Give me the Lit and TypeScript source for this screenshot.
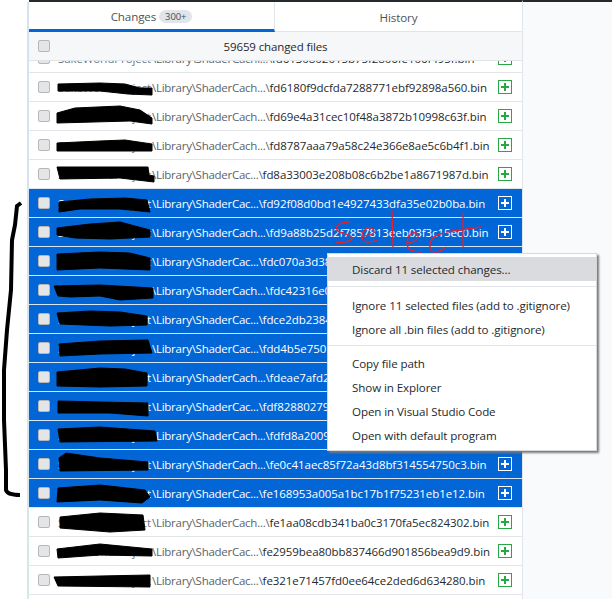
import { LitElement, html, css, svg } from "lit";
import { customElement } from "lit/decorators.js";

const rows: [string, string, boolean][] = [
  ["ShaderCachi...", "fd6130802015b75f2806fe106f495f.bin", false],
  ["ShaderCach...", "fd6180f9dcfda7288771ebf92898a560.bin", false],
  ["ShaderCach...", "fd69e4a31cec10f48a3872b10998c63f.bin", false],
  ["ShaderCach...", "fd8787aaa79a58c24e366e8ae5c6b4f1.bin", false],
  ["ShaderCac...", "fd8a33003e208b08c6b2be1a8671987d.bin", false],
  ["ShaderCac...", "fd92f08d0bd1e4927433dfa35e02b0ba.bin", true],
  ["ShaderCach...", "fd9a88b25d2f7857813eeb03f3c15ec0.bin", true],
  ["ShaderCac...", "fdc070a3d38e4f20a1c97b6de2f1a3b0.bin", true],
  ["ShaderCach...", "fdc42316e0b7d95ac1486f2e37ab90d1.bin", true],
  ["ShaderCac...", "fdce2db2384a9f06c7e15d8b3f60a2c4.bin", true],
  ["ShaderCac...", "fdd4b5e7501c8a3fd296e47b0c1a85e3.bin", true],
  ["ShaderCach...", "fdeae7afd25b1c08e94f36a7d2018c6f.bin", true],
  ["ShaderCac...", "fdf828802794e1ba6d03c5f79a1e28b4.bin", true],
  ["ShaderCach...", "fdfd8a20096e3d17b5c2f840a9e17d36.bin", true],
  ["ShaderCach...", "fe0c41aec85f72a43d8bf314554750c3.bin", true],
  ["ShaderCac...", "fe168953a005a1bc17b1f75231eb1e12.bin", true],
  ["ShaderCach...", "fe1aa08cdb341ba0c3170fa5ec824302.bin", false],
  ["ShaderCac...", "fe2959bea80bb837466d901856bea9d9.bin", false],
  ["ShaderCac...", "fe321e71457fd0ee64ce2ded6d634280.bin", false],
  ["ShaderCach...", "fe3a90c17de24b586f01a3c8e7d2b946.bin", false],
];

const blots = [
  "M58 84 L100 83 L125 84 L140 88 L152 88 L152 95 L128 94 L100 91 L58 91Z",
  "M57 113 L75 108 L120 106 L140 110 L152 118 L152 124 L130 121 L57 123Z",
  "M57 143 L100 141 L125 140 L152 144 L152 151 L57 151Z",
  "M57 167 L148 167 L149 175 L154 176 L154 182 L120 178 L60 179Z",
  "M59 202 L90 199 L125 198 L147 200 L150 212 L120 209 L80 209 L59 212Z",
  "M57 228 L90 224 L120 222 L150 230 L150 237 L110 239 L75 238 L57 235Z",
  "M57 254 L100 252 L130 253 L150 258 L150 270 L100 268 L57 270Z",
  "M54 286 L100 285 L153 288 L153 298 L120 300 L100 296 L70 297 L58 296Z",
  "M57 313 L90 311 L120 312 L147 316 L147 325 L110 326 L60 324Z",
  "M59 344 L100 341 L148 340 L152 353 L100 354 L60 356Z",
  "M57 372 L100 368 L125 369 L147 373 L147 386 L100 387 L57 386Z",
  "M58 401 L100 402 L148 403 L148 416 L110 413 L58 413Z",
  "M58 429 L100 427 L155 431 L157 441 L60 442Z",
  "M59 458 L66 453 L100 458 L148 462 L148 470 L60 471Z",
  "M58 488 L100 485 L145 490 L150 497 L142 503 L100 500 L57 502Z",
  "M60 517 L100 513 L143 515 L145 530 L110 532 L60 528Z",
  "M57 549 L100 544 L152 549 L152 556 L100 555 L58 558Z",
  "M54 577 L100 576 L150 575 L150 587 L58 586Z",
];

const redStrokes = [
  "M349 222 C340 222 335 226 337 230 C340 234 353 234 352 238 C351 242 342 243 336 242",
  "M363 236 C368 236 375 234 374 231 C372 226 366 227 363 232 C360 238 364 243 369 242 C372 242 375 241 378 240",
  "M392 210 L393 248",
  "M408 243 C412 243 419 240 418 236 C417 231 411 232 408 238 C405 245 409 251 414 251 C417 252 419 252 421 252",
  "M444 233 C437 234 431 238 430 244 C429 250 432 253 437 252 C441 251 444 249 446 247",
  "M463 213 L463 248",
  "M446 232 L481 227",
];

@customElement("app-root")
export class AppRoot extends LitElement {
  static styles = css`
    :host {
      display: block;
      font-family: "Open Sans", "Liberation Sans", sans-serif;
    }
    .page {
      position: relative;
      display: flex;
      width: 612px;
      height: 599px;
      overflow: hidden;
      background: #fff;
      font-size: 11.5px;
      letter-spacing: -0.12px;
      color: #24292e;
    }
    .gutter {
      width: 27px;
      flex: none;
    }
    .edge {
      width: 2px;
      flex: none;
      margin-top: 2px;
      background: linear-gradient(#d3e4f0, #d3e4f0 60%, #d3ebe2);
    }
    .panel {
      width: 493px;
      flex: none;
      display: flex;
      flex-direction: column;
      border-top: 2px solid #24292e;
      border-right: 1px solid #e1e4e8;
      overflow: hidden;
    }
    .side {
      flex: 1;
      background: #f9fafb;
      border-top: 2px solid #24292e;
    }
    .tabs {
      display: flex;
      height: 30px;
      flex: none;
      box-sizing: border-box;
      border-bottom: 1px solid #e1e4e8;
    }
    .tab {
      flex: 1;
      display: flex;
      align-items: center;
      justify-content: center;
      gap: 4px;
      box-sizing: border-box;
      color: #4d5359;
      font-size: 11.6px;
      margin-bottom: -1px;
    }
    .tab.on {
      border-right: 1px solid #e1e4e8;
      border-bottom: 3px solid #0366d6;
      padding-top: 2px;
      flex: none;
      width: 246px;
    }
    .count {
      background: #e1e4e8;
      border-radius: 8px;
      font-size: 9.5px;
      line-height: 13px;
      padding: 0 6px;
      color: #444d56;
      margin-left: -1px;
    }
    .head {
      height: 29px;
      flex: none;
      box-sizing: border-box;
      background: #f6f7f9;
      border-bottom: 1px solid #e1e4e8;
      display: flex;
      align-items: center;
      padding-left: 9px;
      color: #24292e;
    }
    .head .label {
      flex: 1;
      text-align: center;
      padding-right: 21px;
    }
    .box {
      width: 12px;
      height: 12px;
      flex: none;
      box-sizing: border-box;
      background: #e4e5e7;
      border: 1px solid #b5b7ba;
      border-radius: 2px;
    }
    .clip {
      height: 12px;
      flex: none;
      overflow: hidden;
      display: flex;
      align-items: flex-end;
    }
    .clip .row {
      width: 100%;
    }
    .row {
      height: 29px;
      flex: none;
      box-sizing: border-box;
      border-bottom: 1px solid #e1e4e8;
      display: flex;
      align-items: center;
      padding: 0 10px 0 9px;
      white-space: nowrap;
    }
    .row.sel {
      background: #0366d6;
      color: #fff;
      border-bottom-color: #d8e6f6;
    }
    .path {
      flex: 1;
      display: flex;
      margin-left: 8px;
      min-width: 0;
    }
    .prefix {
      width: 94px;
      flex: none;
      overflow: hidden;
      color: #6a737d;
    }
    .dir {
      color: #5c6369;
      letter-spacing: -0.26px;
    }
    .file {
      letter-spacing: -0.065px;
    }
    .sel .prefix,
    .sel .dir {
      color: #fff;
    }
    .plus {
      width: 14px;
      height: 14px;
      flex: none;
      display: block;
      color: #28a745;
    }
    .sel .plus {
      color: #fff;
    }
    .menu {
      position: absolute;
      left: 327px;
      top: 253px;
      width: 270px;
      height: 198px;
      box-sizing: border-box;
      background: #fff;
      border: 1px solid #d6d8da;
      box-shadow: 2px 2px 2px #77797c;
      padding-top: 3px;
      font-size: 11.6px;
      letter-spacing: -0.1px;
    }
    .item {
      height: 24px;
      display: flex;
      align-items: center;
      padding-left: 24px;
      white-space: nowrap;
    }
    .item.hot {
      background: #dadbde;
    }
    .sep {
      height: 1px;
      background: #e1e4e8;
      margin: 5px 0 6px;
    }
    .sep.b {
      margin: 4px 0 5px;
    }
    .ink {
      position: absolute;
      left: 0;
      top: 0;
      width: 612px;
      height: 599px;
      pointer-events: none;
    }
  `;

  private renderRow(r: [string, string, boolean]) {
    return html`<div class="row ${r[2] ? "sel" : ""}">
      <div class="box"></div>
      <div class="path">
        <span class="prefix">SakeWorldProject</span>
        <span class="dir">\\Library\\${r[0]}\\</span><span class="file">${r[1]}</span>
      </div>
      <svg class="plus" viewBox="0 0 14 14" fill="none" stroke="currentColor">
        <rect x="0.5" y="0.5" width="13" height="13" stroke-width="1"></rect>
        <path d="M7 3v8M3 7h8" stroke-width="2"></path>
      </svg>
    </div>`;
  }

  render() {
    return html`<div class="page">
      <div class="gutter"></div>
      <div class="edge"></div>
      <div class="panel">
        <div class="tabs">
          <div class="tab on">Changes <span class="count">300+</span></div>
          <div class="tab">History</div>
        </div>
        <div class="head">
          <div class="box"></div>
          <div class="label">59659 changed files</div>
        </div>
        <div class="clip">${this.renderRow(rows[0])}</div>
        ${rows.slice(1).map((r) => this.renderRow(r))}
      </div>
      <div class="side"></div>
      <svg class="ink" viewBox="0 0 612 599">
        ${blots.map((d) => svg`<path d=${d} fill="#000" stroke="#000" stroke-width="1" stroke-linejoin="round"></path>`)}
        <path d="M21 203 L17 206 L15 225 L12 240 L11 290 L7 330 L4 370 L4 420 L6 470 L6 490 C7 494 12 495 20 495" fill="none" stroke="#000" stroke-width="4"></path>
        ${redStrokes.map((d) => svg`<path d=${d} fill="none" stroke="#e8202a" stroke-width="1.3"></path>`)}
      </svg>
      <div class="menu">
        <div class="item hot">Discard 11 selected changes...</div>
        <div class="sep"></div>
        <div class="item">Ignore 11 selected files (add to .gitignore)</div>
        <div class="item">Ignore all .bin files (add to .gitignore)</div>
        <div class="sep b"></div>
        <div class="item">Copy file path</div>
        <div class="item">Show in Explorer</div>
        <div class="item">Open in Visual Studio Code</div>
        <div class="item">Open with default program</div>
      </div>
    </div>`;
  }
}
